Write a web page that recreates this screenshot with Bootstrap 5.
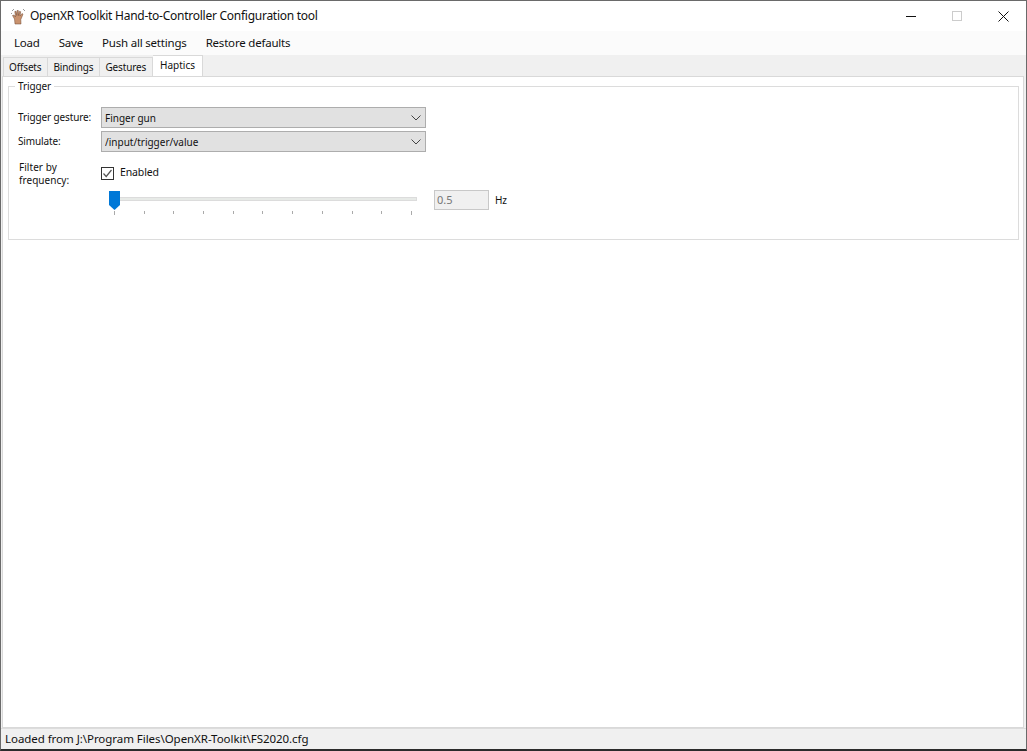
<!DOCTYPE html>
<html lang="en">
<head>
<meta charset="utf-8">
<title>OpenXR Toolkit Hand-to-Controller Configuration tool</title>
<link href="https://cdn.jsdelivr.net/npm/bootstrap@5.3.0/dist/css/bootstrap.min.css" rel="stylesheet">
<style>
html,body{height:100%;margin:0;overflow:hidden}
body{font-family:"Noto Sans",sans-serif;font-size:10px;letter-spacing:-.12px;color:#111;background:#fff}
.app-window{width:1027px;height:751px;border:solid #6a6a6a;border-width:1px 1px 2px 1px;border-bottom-color:#2b2b2b;background:#f0f0f0}
.app-title{height:30px;background:#fff;font-size:12px;letter-spacing:-.26px;padding-left:10px;color:#111}
.app-title-text{margin-left:5px}
.win-btn{width:46px;height:30px}
.app-menu{height:24px;background:#fbfbfb;font-size:11.5px;letter-spacing:-.2px;padding-left:3.500px}
.app-menu-item{padding:0 9.500px;color:#111}
.app-tabs{height:21px;background:#f0f0f0;padding-left:2px;border:0;gap:0}
.app-tab{height:19px;margin-top:2px;padding:0 6px 0 5px;border:1px solid #d9d9d9;border-left-width:0;border-bottom:0;background:#f0f0f0;color:#111;letter-spacing:-.15px}
.app-tab:first-child{border-left-width:1px}
.app-tab.is-on{height:21px;margin-top:0;padding:0 7px 2px;background:#fff;margin-bottom:-1px;position:relative;z-index:1;letter-spacing:0}
.app-pane{background:#fff;border:1px solid #d9d9d9;margin:0 2px 0 1px;padding:9px 4px 0 5px;min-height:0}
.group-frame{height:154px;border:1px solid #dcdcdc;margin:0;padding:0;position:relative}
.group-legend{position:absolute;left:6px;top:-7px;background:#fff;padding:0 3px;line-height:13px}
.row-combo{height:21px;padding-left:9px;margin-top:0}
.row-one{margin-top:20px}
.row-two{margin-top:3px}
.field-label{width:83px;flex:none}
.win-select.form-select{width:325px;height:21px;padding:1px 20px 0 3px;border:1px solid #adadad;border-radius:0;background-color:#e1e1e1;font-size:10px;letter-spacing:0;line-height:18px;color:#111;font-family:inherit;box-shadow:none;
background-image:url("data:image/svg+xml,%3Csvg xmlns='http://www.w3.org/2000/svg' width='10' height='6'%3E%3Cpath d='M.5.5 5 5 9.5.5' fill='none' stroke='%23444' stroke-width='1'/%3E%3C/svg%3E");background-position:right 4px center;background-size:10px 6px}
.row-filter{padding-left:10px;margin-top:9px;height:26px}
.filter-label{width:82px;flex:none;line-height:13px;letter-spacing:.05px}
.form-check-input.win-check{width:13px;height:13px;margin:0 6px 0 0;border:1px solid #333;border-radius:0;background-color:#fff;float:none;
background-image:url("data:image/svg+xml,%3Csvg xmlns='http://www.w3.org/2000/svg' width='11' height='11'%3E%3Cpath d='M1.5 5.500 4.200 8.500 9.500 2' fill='none' stroke='%23555' stroke-width='1.200'/%3E%3C/svg%3E");background-size:11px 11px;background-position:center}
.row-check{margin-top:5px;height:14px;font-size:10.5px}
.row-slider{padding-left:100px;margin-top:3px;height:28px}
.slider-box{width:308px;height:26px;position:relative}
.slider-rail{position:absolute;left:0;right:0;top:7px;height:4px;background:#e7eae7;border:1px solid #dcdcdc}
.slider-thumb{position:absolute;left:0;top:1px}
.slider-ticks{position:absolute;left:5px;width:298px;top:21px}
.slider-tick{width:1px;height:3px;background:#aaa}
.slider-tick.is-end{height:4px}
.hz-input{width:55px;height:20px;margin-left:17px;border:1px solid #c8c8c8;outline:none;background:#f0f0f0;color:#777;font-size:11px;padding:0 2px 2px;font-family:inherit;border-radius:0}
.hz-label{margin-left:6px;margin-top:3px}
.app-status{height:21px;background:#f0f0f0;font-size:11.5px;letter-spacing:-.05px;padding-left:4px;color:#111;border-top:1px solid #dcdcdc}
</style>
</head>
<body>
<div class="app-window d-flex flex-column">
  <div class="app-title d-flex align-items-center flex-shrink-0">
    <svg width="14" height="17" viewBox="0 0 14 17" aria-hidden="true">
      <path d="M1 3 3 1M12 1l2 2M0 6l1-1" stroke="#9a9a9a" stroke-width="1" fill="none"/>
      <path d="M4 16 3.500 11 1.500 7.500 3 7 4.500 9 3.800 3.500 5 3.300 5.800 7.500 6 2.500 7.300 2.500 7.500 7.500 8.500 3.300 9.700 3.700 9 8 11 5.500 12 6.200 9.800 11.500 10 16Z" fill="#c9926e" stroke="#6e4630" stroke-width=".5"/>
    </svg>
    <span class="app-title-text flex-grow-1">OpenXR Toolkit Hand-to-Controller Configuration tool</span>
    <div class="win-btn d-flex align-items-center justify-content-center">
      <svg width="11" height="11"><path d="M0 5.500H10" stroke="#111"/></svg>
    </div>
    <div class="win-btn d-flex align-items-center justify-content-center">
      <svg width="11" height="11"><rect x=".5" y=".5" width="9" height="9" fill="none" stroke="#ccc"/></svg>
    </div>
    <div class="win-btn d-flex align-items-center justify-content-center">
      <svg width="11" height="11"><path d="M.5.500 10.500 10.500M10.500.500 .5 10.500" stroke="#111"/></svg>
    </div>
  </div>
  <div class="app-menu d-flex align-items-center flex-shrink-0">
    <span class="app-menu-item">Load</span>
    <span class="app-menu-item">Save</span>
    <span class="app-menu-item">Push all settings</span>
    <span class="app-menu-item">Restore defaults</span>
  </div>
  <div class="app-tabs d-flex flex-shrink-0">
    <span class="app-tab d-flex align-items-center">Offsets</span>
    <span class="app-tab d-flex align-items-center">Bindings</span>
    <span class="app-tab d-flex align-items-center">Gestures</span>
    <span class="app-tab is-on d-flex align-items-center">Haptics</span>
  </div>
  <div class="app-pane flex-grow-1">
    <div class="group-frame">
      <span class="group-legend">Trigger</span>
      <div class="row-combo row-one d-flex align-items-center">
        <span class="field-label">Trigger gesture:</span>
        <select class="form-select win-select"><option>Finger gun</option></select>
      </div>
      <div class="row-combo row-two d-flex align-items-center">
        <span class="field-label">Simulate:</span>
        <select class="form-select win-select"><option>/input/trigger/value</option></select>
      </div>
      <div class="row-filter d-flex">
        <span class="filter-label">Filter by<br>frequency:</span>
        <div class="row-check d-flex align-items-center">
          <input class="form-check-input win-check" type="checkbox" checked>
          <span>Enabled</span>
        </div>
      </div>
      <div class="row-slider d-flex align-items-start">
        <div class="slider-box">
          <div class="slider-rail"></div>
          <svg class="slider-thumb" width="11" height="19"><path d="M0 0H11V14L5.500 19 0 14Z" fill="#0078d7"/></svg>
          <div class="slider-ticks d-flex justify-content-between">
            <i class="slider-tick is-end"></i><i class="slider-tick"></i><i class="slider-tick"></i><i class="slider-tick"></i><i class="slider-tick"></i><i class="slider-tick"></i><i class="slider-tick"></i><i class="slider-tick"></i><i class="slider-tick"></i><i class="slider-tick"></i><i class="slider-tick is-end"></i>
          </div>
        </div>
        <input class="hz-input" type="text" value="0.5" disabled>
        <span class="hz-label">Hz</span>
      </div>
    </div>
  </div>
  <div class="app-status d-flex align-items-center flex-shrink-0">Loaded from J:\Program Files\OpenXR-Toolkit\FS2020.cfg</div>
</div>
<script src="https://cdn.jsdelivr.net/npm/bootstrap@5.3.0/dist/js/bootstrap.bundle.min.js"></script>
</body>
</html>
